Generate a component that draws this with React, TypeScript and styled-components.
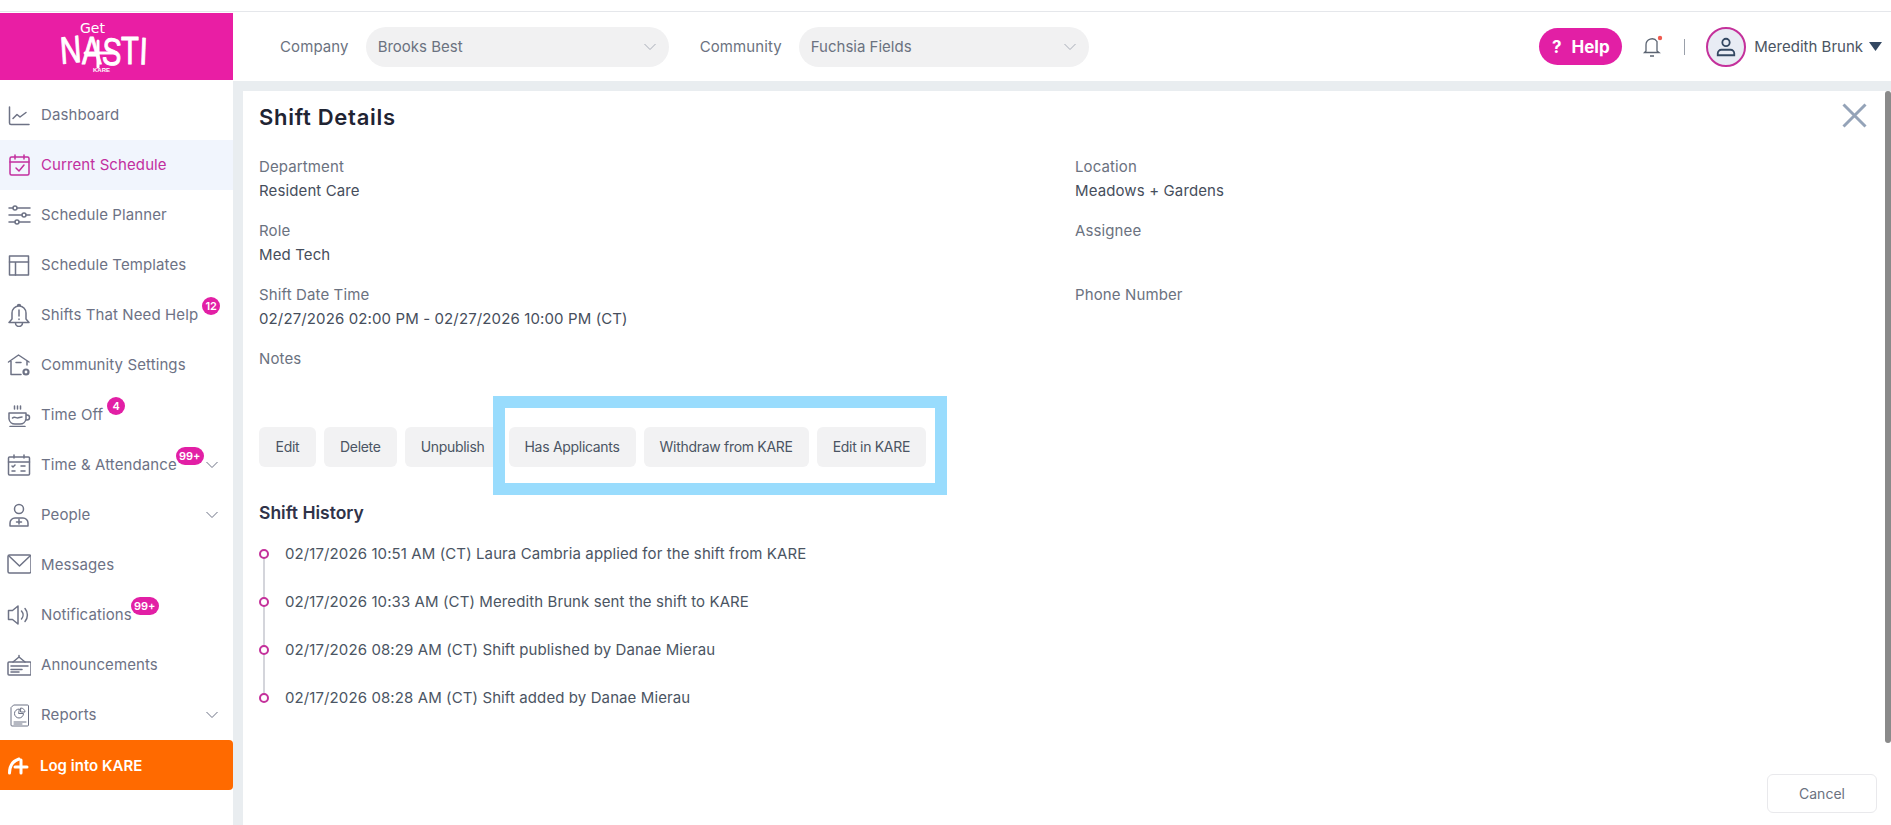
import React from "react";
import styled, { createGlobalStyle } from "styled-components";

const Global = createGlobalStyle`
  html, body { margin: 0; padding: 0; background: #fff; }
  body { font-family: Inter, "Noto Sans", sans-serif; overflow: hidden; }
  * { box-sizing: border-box; }
`;

const Page = styled.div`
  width: 1891px;
  height: 825px;
  display: flex;
  flex-direction: column;
  overflow: hidden;
  background: #fff;
`;
const TopStrip = styled.div`
  height: 12px;
  flex: none;
  border-bottom: 1px solid #e5e7eb;
`;
const Header = styled.header`
  height: 69px;
  flex: none;
  display: flex;
  align-items: center;
  padding-right: 9px;
  background: #fff;
`;
const LogoBox = styled.div`
  width: 233px;
  height: 67px;
  flex: none;
  padding-right: 24px;
  background: #e91ea4;
  display: flex;
  align-items: center;
  justify-content: center;
`;
const SelectGroup = styled.div<{ $first?: boolean }>`
  display: flex;
  align-items: center;
  gap: 17px;
  margin-left: ${(p) => (p.$first ? "47px" : "31px")};
`;
const FieldName = styled.span`
  font-size: 15px;
  letter-spacing: 0.1px;
  color: #6b7280;
`;
const SelectBox = styled.div<{ $w: number }>`
  width: ${(p) => p.$w}px;
  height: 40px;
  border-radius: 20px;
  background: #f1f1f2;
  display: flex;
  align-items: center;
  justify-content: space-between;
  padding: 0 13px 0 12px;
  font-size: 15px;
  color: #6b7280;
  svg {
    stroke: #a8adb8;
  }
`;
const HeaderRight = styled.div`
  margin-left: auto;
  display: flex;
  align-items: center;
`;
const HelpPill = styled.div`
  width: 83px;
  height: 37px;
  border-radius: 19px;
  background: #e21fa5;
  color: #fff;
  font-weight: 700;
  font-size: 17px;
  display: flex;
  align-items: center;
  justify-content: center;
  gap: 10px;
`;
const Divider = styled.div`
  width: 1px;
  height: 16px;
  background: #9aa0aa;
  margin: 0 21px 0 20px;
`;
const BellWrap = styled.div`
  margin-left: 18px;
  width: 24px;
  height: 24px;
  display: flex;
`;
const Avatar = styled.div`
  width: 40px;
  height: 40px;
  border-radius: 50%;
  border: 2px solid #c4319b;
  background: #e8ecf4;
  display: flex;
  align-items: center;
  justify-content: center;
`;
const UserName = styled.span`
  margin-left: 8px;
  font-size: 15px;
  color: #4b5563;
`;
const Caret = styled.svg`
  margin-left: 6px;
  width: 13px;
  height: 9px;
`;

const Body = styled.div`
  flex: 1;
  min-height: 0;
  display: flex;
  background: #e9edf0;
`;
const Sidebar = styled.nav`
  width: 233px;
  flex: none;
  background: #fff;
  padding-top: 9px;
`;
const NavItem = styled.div<{ $active?: boolean }>`
  height: 50px;
  display: flex;
  align-items: center;
  padding: 0 15px 0 7px;
  background: ${(p) => (p.$active ? "#f1f5fd" : "transparent")};
  color: ${(p) => (p.$active ? "#c22f9f" : "#6d7285")};
  font-size: 15px;
  letter-spacing: 0.1px;
`;
const NavLabel = styled.span`
  white-space: nowrap;
  flex: none;
  margin-bottom: 2px;
`;
const NavIcon = styled.svg`
  width: 24px;
  height: 24px;
  flex: none;
  margin-right: 10px;
  fill: none;
  stroke: currentColor;
  stroke-width: 1.5;
  stroke-linecap: round;
  stroke-linejoin: round;
`;
const KareIcon = styled(NavIcon)`
  margin-right: 9px;
  stroke-width: 3;
`;
const Badge = styled.span<{ $wide?: boolean }>`
  height: 18px;
  flex: none;
  min-width: ${(p) => (p.$wide ? "28px" : "18px")};
  margin-left: ${(p) => (p.$wide ? "-1px" : "4px")};
  border-radius: 9px;
  background: #e21fa5;
  color: #fff;
  font-size: 11px;
  font-weight: 600;
  letter-spacing: 0;
  display: flex;
  align-items: center;
  justify-content: center;
  transform: translateY(-9px);
`;
const Chevron = styled.svg`
  margin-left: auto;
  width: 12px;
  height: 8px;
  flex: none;
  fill: none;
  stroke: #6d7285;
  stroke-width: 1;
`;
const KareButton = styled.div`
  height: 50px;
  display: flex;
  align-items: center;
  padding-left: 7px;
  background: #ff6a00;
  border-radius: 0 4px 4px 0;
  color: #fff;
  font-size: 15px;
  font-weight: 600;
`;

const Gutter = styled.div`
  width: 10px;
  flex: none;
`;
const Panel = styled.main`
  flex: 1;
  margin-top: 10px;
  background: #fff;
  position: relative;
  display: flex;
  flex-direction: column;
  padding: 13px 14px 12px 16px;
`;
const Title = styled.h1`
  margin: 0 0 25px;
  height: 26px;
  line-height: 26px;
  font-size: 22px;
  font-weight: 600;
  color: #1f2433;
  letter-spacing: 0.7px;
`;
const CloseIcon = styled.svg`
  position: absolute;
  top: 12px;
  right: 24px;
  width: 25px;
  height: 25px;
  fill: none;
  stroke: #94a3b8;
  stroke-width: 3;
`;
const Scrollbar = styled.div`
  position: absolute;
  top: 0;
  right: 0;
  width: 6px;
  height: 652px;
  background: #8a8a8a;
  border-radius: 3px;
`;
const FieldGrid = styled.div`
  display: grid;
  grid-template-columns: 816px 1fr;
  grid-auto-rows: 64px;
`;
const Field = styled.div`
  font-size: 15px;
  line-height: 24px;
  letter-spacing: 0.12px;
`;
const Label = styled.div`
  color: #6b7280;
`;
const Value = styled.div`
  color: #464e5c;
`;
const ActionRow = styled.div`
  position: relative;
  margin-top: 16px;
  display: flex;
  gap: 8px;
`;
const Action = styled.div`
  height: 40px;
  min-width: 57px;
  padding: 0 16px 2px;
  border-radius: 6px;
  background: #f2f2f3;
  color: #4b5563;
  font-size: 14px;
  letter-spacing: -0.3px;
  display: flex;
  align-items: center;
  justify-content: center;
`;
const Highlight = styled.div`
  position: absolute;
  left: 234px;
  top: -31px;
  width: 454px;
  height: 99px;
  border: 12px solid #99dcfd;
  pointer-events: none;
`;
const HistoryTitle = styled.h2`
  margin: 34px 0 5px;
  height: 24px;
  line-height: 24px;
  font-size: 17.500px;
  font-weight: 600;
  color: #2f3349;
`;
const Timeline = styled.div`
  display: flex;
  flex-direction: column;
`;
const Row = styled.div<{ $last?: boolean }>`
  position: relative;
  height: 48px;
  display: flex;
  align-items: center;
  gap: 16px;
  font-size: 15px;
  color: #4b5563;
  letter-spacing: 0.1px;
  &::before {
    content: "";
    display: ${(p) => (p.$last ? "none" : "block")};
    position: absolute;
    left: 4px;
    top: 24px;
    width: 2px;
    height: 48px;
    background: #d4d5db;
  }
`;
const RowText = styled.span`
  margin-bottom: 2px;
`;
const Dot = styled.span`
  position: relative;
  width: 10px;
  height: 10px;
  flex: none;
  border-radius: 50%;
  border: 2px solid #c4319b;
  background: #fff;
`;
const Footer = styled.div`
  margin-top: auto;
  display: flex;
  justify-content: flex-end;
`;
const Cancel = styled.div`
  width: 110px;
  height: 39px;
  border: 1px solid #e9e9ec;
  border-radius: 6px;
  color: #6b7280;
  font-size: 14px;
  display: flex;
  align-items: center;
  justify-content: center;
`;

const Logo = () => (
  <svg width="90" height="54" viewBox="0 0 90 54" overflow="visible">
    <g fill="#fff" fontFamily="'Liberation Sans', sans-serif">
      <text x="20" y="13" fontSize="14" fontFamily="'DejaVu Sans', sans-serif">Get</text>
      <text
        x="1"
        y="44"
        fontSize="38"
        textLength="86"
        lengthAdjust="spacingAndGlyphs"
        rotate="-5 0 4 0 3"
        stroke="#fff"
        strokeWidth="1"
        strokeLinejoin="round"
      >
        NASTI
      </text>
      <text x="33" y="52" fontSize="6" fontWeight="700">KARE</text>
    </g>
    <path d="M25 33h31M38 21v26" fill="none" stroke="#fff" strokeWidth="3" strokeLinecap="round" />
  </svg>
);

const Chev = () => (
  <Chevron viewBox="0 0 12 8">
    <path d="M.5 1 6 6.500 11.500 1" />
  </Chevron>
);

type Item = { label: string; icon: React.ReactNode; active?: boolean; badge?: string; wide?: boolean; chev?: boolean };

const items: Item[] = [
  { label: "Dashboard", icon: <><path d="M2.500 4v16a1.500 1.500 0 0 0 1.500 1.500h18" /><path d="M6 15.500l4-4 3 2.500 6-4.500" /></> },
  { label: "Current Schedule", active: true, icon: <><rect x="3" y="4" width="19" height="18" rx="1.500" /><path d="M3 9h19M8 2v4M17 2v4M9 15l3 3 5-6" /></> },
  { label: "Schedule Planner", icon: <><path d="M2 5h4M10 5h13M2 12h13M19 12h4M2 19h6M12 19h11" /><circle cx="8" cy="5" r="2" /><circle cx="17" cy="12" r="2" /><circle cx="10" cy="19" r="2" /></> },
  { label: "Schedule Templates", icon: <><rect x="2.500" y="3" width="19" height="19" /><path d="M2.500 9h19M8.500 9v13" /></> },
  { label: "Shifts That Need Help", badge: "12", icon: <><path d="M5 16V10a7 7 0 0 1 14 0v6l3 3.500H2zM8.500 20a3.500 3.500 0 0 0 7 0M10.500 3a1.500 1.500 0 0 1 3 0" /><path d="M12 7v6M12 16v.500" /></> },
  { label: "Community Settings", icon: <><path d="M1.500 9 11.500 2 22 9M4 8v13.500h10M20 8v4M9 9.500h5" /><circle cx="19" cy="19" r="2.500" strokeWidth="2.200" /></> },
  { label: "Time Off", badge: "4", icon: <><path d="M2 10h17v6a6 6 0 0 1-6 5H8a6 6 0 0 1-6-5zM19 12h1a2.500 2.500 0 0 1 0 5h-1.500M5.500 15c2-2 3.500 0 5 0s2.500-1 4.500-1M7.500 3v3M10.500 3v3M13.500 3v3M3 23.500h15" /></> },
  { label: "Time & Attendance", badge: "99+", wide: true, chev: true, icon: <><rect x="1.500" y="4" width="21" height="18" rx="1" /><path d="M1.500 9h21M7 2v3M17 2v3M5 13l1 1 2-2M14 13h4M5 18h3M14 18h4" /></> },
  { label: "People", chev: true, icon: <><circle cx="12" cy="6" r="4.500" /><path d="M3 23v-3a5 5 0 0 1 5-5h8a5 5 0 0 1 5 5v3zM12 16.500v4.500M9.500 19h5" /></> },
  { label: "Messages", icon: <><rect x="1" y="2" width="23" height="18" rx="1.500" /><path d="M2 3l10.500 10L23 3" /></> },
  { label: "Notifications", badge: "99+", wide: true, icon: <><path d="M1.500 7.500h4L11 3v18l-5.500-4.500h-4z" /><path d="M14.500 8a6 6 0 0 1 0 8M18 5.500a10 10 0 0 1 0 13" /></> },
  { label: "Announcements", icon: <><path d="M6 9l6-5 6 5M12 4V2.500" /><rect x="1" y="9" width="23" height="13" rx="1" /><path d="M4 13h17M4 16.500h11M4 19h8" /></> },
  { label: "Reports", chev: true, icon: <><path d="M7 2h13.500a1 1 0 0 1 1 1v19a1 1 0 0 1-1 1H5a1 1 0 0 1-1-1V5zM7 19h12M7 21h8" strokeWidth="1" /><path d="M12 6a4.500 4.500 0 1 0 4.500 4.500H12z M14 5a4 4 0 0 1 4 4h-4z" strokeWidth="1" /></> },
];

const fields: [string, string][] = [
  ["Department", "Resident Care"],
  ["Location", "Meadows + Gardens"],
  ["Role", "Med Tech"],
  ["Assignee", ""],
  ["Shift Date Time", "02/27/2026 02:00 PM - 02/27/2026 10:00 PM (CT)"],
  ["Phone Number", ""],
  ["Notes", ""],
];

const history = [
  "02/17/2026 10:51 AM (CT) Laura Cambria applied for the shift from KARE",
  "02/17/2026 10:33 AM (CT) Meredith Brunk sent the shift to KARE",
  "02/17/2026 08:29 AM (CT) Shift published by Danae Mierau",
  "02/17/2026 08:28 AM (CT) Shift added by Danae Mierau",
];

export default function App() {
  return (
    <Page>
      <Global />
      <TopStrip />
      <Header>
        <LogoBox>
          <Logo />
        </LogoBox>
        <SelectGroup $first>
          <FieldName>Company</FieldName>
          <SelectBox $w={303}>
            Brooks Best
            <Chev />
          </SelectBox>
        </SelectGroup>
        <SelectGroup>
          <FieldName>Community</FieldName>
          <SelectBox $w={290}>
            Fuchsia Fields
            <Chev />
          </SelectBox>
        </SelectGroup>
        <HeaderRight>
          <HelpPill>
            <span>?</span>
            <span>Help</span>
          </HelpPill>
          <BellWrap>
            <svg width="24" height="24" viewBox="0 0 24 24" fill="none" stroke="#5b6472" strokeWidth="1.300">
              <path d="M6 16V10a6 6 0 0 1 11-3.500V16l2 1.500H4.500L6 16zM10 21h4" />
              <circle cx="20" cy="3" r="2.200" fill="#ef5b50" stroke="none" />
            </svg>
          </BellWrap>
          <Divider />
          <Avatar>
            <svg width="22" height="22" viewBox="0 0 24 24" fill="none" stroke="#334862" strokeWidth="2">
              <circle cx="12" cy="7" r="4" />
              <path d="M3 21v-2a4 4 0 0 1 4-4h10a4 4 0 0 1 4 4v2z" />
            </svg>
          </Avatar>
          <UserName>Meredith Brunk</UserName>
          <Caret viewBox="0 0 13 9">
            <path d="M0 0h13L6.500 9z" fill="#334862" />
          </Caret>
        </HeaderRight>
      </Header>
      <Body>
        <Sidebar>
          {items.map((it) => (
            <NavItem key={it.label} $active={it.active}>
              <NavIcon viewBox="0 0 24 24">{it.icon}</NavIcon>
              <NavLabel>{it.label}</NavLabel>
              {it.badge && <Badge $wide={it.wide}>{it.badge}</Badge>}
              {it.chev && <Chev />}
            </NavItem>
          ))}
          <KareButton>
            <KareIcon viewBox="0 0 24 24">
              <path d="M2.500 20C2.500 13 6 8 12 6M14 7v13M8 14h12" />
            </KareIcon>
            Log into KARE
          </KareButton>
        </Sidebar>
        <Gutter />
        <Panel>
          <Title>Shift Details</Title>
          <CloseIcon viewBox="0 0 25 25">
            <path d="M1.500 1.500l22 22M23.500 1.500l-22 22" />
          </CloseIcon>
          <Scrollbar />
          <FieldGrid>
            {fields.map(([l, v]) => (
              <Field key={l}>
                <Label>{l}</Label>
                <Value>{v}</Value>
              </Field>
            ))}
          </FieldGrid>
          <ActionRow>
            <Action>Edit</Action>
            <Action>Delete</Action>
            <Action>Unpublish</Action>
            <Action>Has Applicants</Action>
            <Action>Withdraw from KARE</Action>
            <Action>Edit in KARE</Action>
            <Highlight />
          </ActionRow>
          <HistoryTitle>Shift History</HistoryTitle>
          <Timeline>
            {history.map((h, i) => (
              <Row key={h} $last={i === history.length - 1}>
                <Dot />
                <RowText>{h}</RowText>
              </Row>
            ))}
          </Timeline>
          <Footer>
            <Cancel>Cancel</Cancel>
          </Footer>
        </Panel>
      </Body>
    </Page>
  );
}
